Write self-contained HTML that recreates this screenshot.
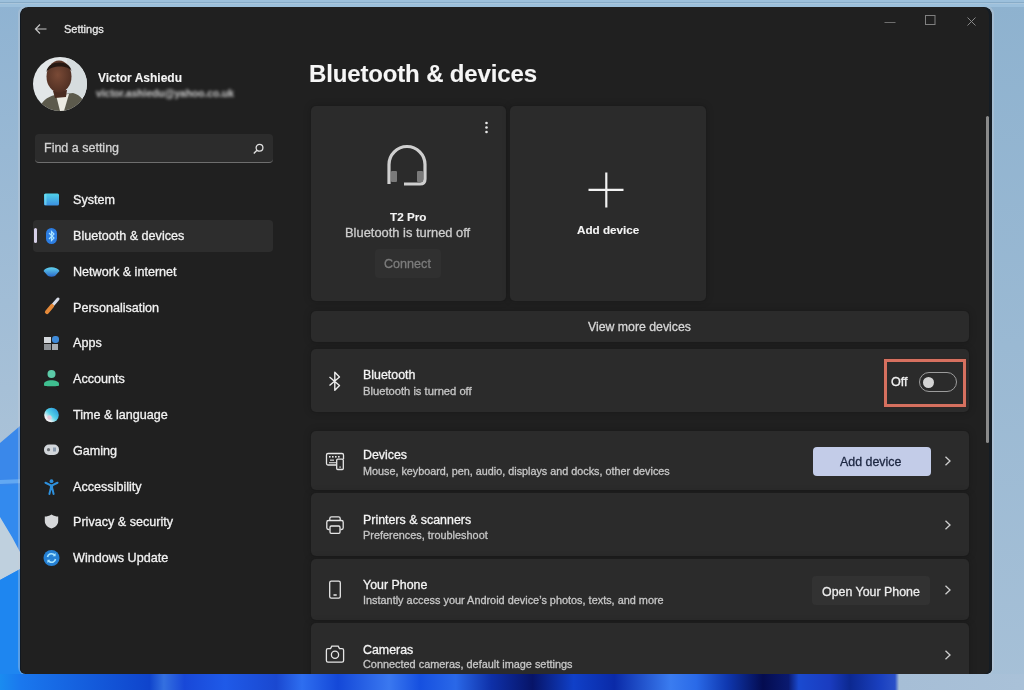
<!DOCTYPE html>
<html><head><meta charset="utf-8">
<style>
*{margin:0;padding:0;box-sizing:border-box}
html,body{width:1024px;height:690px;overflow:hidden}
body{position:relative;font-family:"Liberation Sans",sans-serif;background:#a3bfd6;color:#fff}
.abs{position:absolute}
.t{position:absolute;white-space:nowrap;line-height:1;will-change:transform;-webkit-text-stroke-width:0.3px}
#win{position:absolute;left:20px;top:7px;width:972px;height:667px;background:#202020;border-radius:8px 8px 5px 5px;overflow:hidden;box-shadow:inset -3px 0 0 #141c24,inset 1px 0 0 #111820}
.nav{position:absolute;left:73px;font-size:12.6px;line-height:1;color:#f2f2f2;white-space:nowrap;will-change:transform;-webkit-text-stroke-width:0.3px}
.card{position:absolute;background:#2b2b2b;border-radius:5px;box-shadow:0 0 0 1px #1c1c1c,0 0 6px 2px rgba(0,0,0,.12)}
.row{position:absolute;left:311px;width:658px;background:#2b2b2b;border-radius:5px;box-shadow:0 0 0 1px #1c1c1c,0 0 6px 2px rgba(0,0,0,.12)}
.h{font-size:12.4px;color:#f4f4f4}
.s{font-size:10.9px;color:#c6c6c6}
.chev{position:absolute;left:944px;width:8px;height:10px}
svg{position:absolute;overflow:visible}
</style></head><body>
<!-- wallpaper -->
<svg style="left:0;top:0" width="1024" height="690" viewBox="0 0 1024 690">
<defs>
<linearGradient id="gl" x1="0" y1="0" x2="0" y2="1"><stop offset="0" stop-color="#8fb3d2"/><stop offset="1" stop-color="#b8cadb"/></linearGradient>
<linearGradient id="gr" x1="0" y1="0" x2="0" y2="1"><stop offset="0" stop-color="#8eb2cf"/><stop offset="1" stop-color="#a6c0d7"/></linearGradient>
<linearGradient id="gb" x1="0" y1="0" x2="1" y2="0"><stop offset="0" stop-color="#1a8cf0"/><stop offset="0.02" stop-color="#1a78ee"/><stop offset="0.146" stop-color="#0f44cc"/><stop offset="0.16" stop-color="#3470e0"/><stop offset="0.18" stop-color="#1848d8"/><stop offset="0.22" stop-color="#1f5ae8"/><stop offset="0.27" stop-color="#1a48d0"/><stop offset="0.295" stop-color="#2e6ef0"/><stop offset="0.33" stop-color="#1448d8"/><stop offset="0.38" stop-color="#3a78f0"/><stop offset="0.41" stop-color="#1650e0"/><stop offset="0.445" stop-color="#2a68e8"/><stop offset="0.48" stop-color="#0e30a8"/><stop offset="0.52" stop-color="#071468"/><stop offset="0.56" stop-color="#1040c8"/><stop offset="0.6" stop-color="#0a2aa8"/><stop offset="0.655" stop-color="#3a7cf0"/><stop offset="0.68" stop-color="#2a6ae8"/><stop offset="0.71" stop-color="#0f38b0"/><stop offset="0.745" stop-color="#040c50"/><stop offset="0.77" stop-color="#0a1a70"/><stop offset="0.78" stop-color="#1a4ad0"/><stop offset="0.81" stop-color="#1a3cc0"/><stop offset="0.83" stop-color="#0c2890"/><stop offset="0.86" stop-color="#1a40c0"/><stop offset="0.874" stop-color="#2a50c8"/><stop offset="0.878" stop-color="#a6bed6"/><stop offset="1" stop-color="#a9c1d8"/></linearGradient>
</defs>
<rect x="0" y="0" width="1024" height="690" fill="url(#gr)"/>
<rect x="0" y="0" width="24" height="690" fill="url(#gl)"/>
<path d="M0,443 L20,426 L24,423 L24,690 L0,690Z" fill="#3a88ea"/>
<path d="M0,480 L24,479 L24,483 L0,484Z" fill="#62a8f2"/>
<path d="M0,486 L24,484 L24,540 L0,560Z" fill="#2e8cf0" opacity=".6"/><path d="M0,517 L12,537 L20,552 L24,552 L24,567 L0,580Z" fill="#bfd0de"/>
<path d="M0,580 L24,567 L24,690 L0,690Z" fill="#1e86f0"/>
<rect x="18" y="5" width="976" height="671" rx="9" fill="rgb(200,205,215)" opacity=".35"/>
<rect x="0" y="674" width="1024" height="16" fill="url(#gb)"/>
<rect x="0" y="0" width="1024" height="7" fill="#9cc0dc"/><rect x="0" y="2" width="1024" height="1" fill="#88acc8"/><rect x="0" y="3" width="1024" height="1" fill="#aac6dc"/>
</svg>

<div id="app" style="position:absolute;left:0;top:0;width:1024px;height:690px;clip-path:inset(7px 32px 16px 20px round 8px 8px 5px 5px)">
<div id="win"></div>

<!-- title bar -->
<svg style="left:34px;top:23px" width="14" height="12" viewBox="0 0 14 12"><path d="M1.5,6 H12.5 M6,1.5 L1.5,6 L6,10.5" fill="none" stroke="#c4c4c4" stroke-width="1.2"/></svg>
<div class="t" style="left:64px;top:23.7px;font-size:11px;color:#e8e8e8">Settings</div>
<svg style="left:884px;top:18px" width="12" height="8"><path d="M0.5,4.5 H11.5" stroke="#6e6e6e" stroke-width="1"/></svg>
<svg style="left:925px;top:15px" width="11" height="11"><rect x="0.5" y="0.5" width="9.5" height="9" fill="none" stroke="#808080" stroke-width="1"/></svg>
<svg style="left:967px;top:16.5px" width="9" height="9"><path d="M0.5,0.5 L8.5,8.5 M8.5,0.5 L0.5,8.5" stroke="#888888" stroke-width="1"/></svg>

<!-- avatar -->
<svg style="left:33px;top:57px" width="54" height="54" viewBox="0 0 54 54">
<defs><clipPath id="cav"><circle cx="27" cy="27" r="27"/></clipPath>
<radialGradient id="gface" cx="0.45" cy="0.45" r="0.6"><stop offset="0" stop-color="#7a4a36"/><stop offset="1" stop-color="#4e2e22"/></radialGradient></defs>
<g clip-path="url(#cav)">
<rect width="54" height="54" fill="#e2e6e8"/>
<rect x="34" y="0" width="20" height="40" fill="#d6dcde"/>
<path d="M6,54 C8,44 14,40 22,38 L40,36 C48,38 52,44 54,54Z" fill="#5c5a4c"/>
<path d="M23,38 L27,54 L31,54 L36,37Z" fill="#ecebe2"/>
<path d="M20,34 L34,33 L33,40 L22,41Z" fill="#4a2c20"/>
<ellipse cx="26" cy="19.5" rx="12.5" ry="16" fill="url(#gface)"/>
<path d="M13.5,15 C14,3 37,2 38.5,14 C35,8 18,8 13.5,15Z" fill="#251812"/>
</g></svg>
<div class="t" style="left:98px;top:72px;font-size:12px;font-weight:bold;-webkit-text-stroke-width:0.1px;color:#f4f4f4">Victor Ashiedu</div>
<div class="t" style="left:96px;top:88.5px;font-size:10.2px;font-weight:bold;-webkit-text-stroke-width:0.1px;color:#c4c4c4;filter:blur(1.4px)">victor.ashiedu@yahoo.co.uk</div>

<!-- search -->
<div class="abs" style="left:35px;top:134px;width:238px;height:29px;background:#2c2c2c;border-radius:4px;border-bottom:1px solid #6e6e6e"></div>
<div class="t" style="left:44px;top:142.4px;font-size:12.5px;color:#d2d2d2">Find a setting</div>
<svg style="left:251.5px;top:143px" width="13" height="12" viewBox="0 0 13 12"><circle cx="7.5" cy="4.8" r="3.4" fill="none" stroke="#e0e0e0" stroke-width="1.3"/><path d="M5,7.3 L1.8,10.5" stroke="#e0e0e0" stroke-width="1.4"/></svg>

<!-- nav -->
<div class="abs" style="left:33px;top:220px;width:240px;height:32px;background:#2d2d2d;border-radius:4px"></div>
<div class="abs" style="left:33.5px;top:228px;width:3px;height:15px;background:#d6d0e8;border-radius:2px"></div>

<!-- nav icons -->
<svg style="left:44px;top:193px" width="15" height="13" viewBox="0 0 15 13"><defs><linearGradient id="gs" x1="0" y1="0" x2="0" y2="1"><stop offset="0" stop-color="#50d2ea"/><stop offset="1" stop-color="#3b8fe0"/></linearGradient></defs><rect x="0" y="0.5" width="15" height="12" rx="1.5" fill="url(#gs)"/><rect x="0.5" y="1" width="2" height="11" fill="#7ee4f4" opacity=".6"/></svg>
<svg style="left:46px;top:228px" width="11" height="16" viewBox="0 0 11 16"><rect x="0" y="0" width="11" height="16" rx="5.5" fill="#2c7de2"/><path d="M3,5 L8,10 L5.5,12.5 V3.5 L8,6 L3,11" fill="none" stroke="#a8e2ff" stroke-width="1.2"/></svg>
<svg style="left:43px;top:266px" width="17" height="11" viewBox="0 0 17 11"><defs><linearGradient id="gn" x1="0" y1="0" x2="0" y2="1"><stop offset="0" stop-color="#62d4f0"/><stop offset="1" stop-color="#2a68c8"/></linearGradient></defs><path d="M0.5,5 C3,0 14,0 16.5,5 L12,10 C10,11 7,11 5,10Z" fill="url(#gn)"/></svg>
<svg style="left:44px;top:297px" width="16" height="18" viewBox="0 0 16 18"><path d="M14,2 L8,9" stroke="#d8dce8" stroke-width="3" stroke-linecap="round"/><path d="M8,9 L3,15" stroke="#e58a3a" stroke-width="4.2" stroke-linecap="round"/></svg>
<svg style="left:44px;top:336px" width="15" height="15" viewBox="0 0 15 15"><rect x="0" y="1" width="7" height="6" fill="#d4d8dc"/><rect x="8" y="0" width="7" height="7" rx="3" fill="#3e8ad8"/><rect x="0" y="8" width="7" height="6" fill="#8c9196"/><rect x="8" y="8" width="6" height="6" fill="#a8adb2"/></svg>
<svg style="left:45px;top:369px" width="13" height="18" viewBox="0 0 13 18"><circle cx="6.5" cy="5" r="4" fill="#5ccba8"/><path d="M-1,15 C-1,10 14,10 14,15 L14,16.5 C14,17.5 -1,17.5 -1,16.5Z" fill="#3fbf90"/></svg>
<svg style="left:44px;top:407px" width="15" height="16" viewBox="0 0 15 16"><defs><linearGradient id="gt" x1="1" y1="0" x2="0" y2="1"><stop offset="0" stop-color="#1b8ad8"/><stop offset="0.5" stop-color="#57d2e8"/><stop offset="0.75" stop-color="#f0f2f4"/><stop offset="1" stop-color="#f4e8ee"/></linearGradient></defs><circle cx="7.5" cy="8" r="7.3" fill="url(#gt)"/><circle cx="5.5" cy="10.5" r="2.2" fill="#e4c8d8"/></svg>
<svg style="left:44px;top:444px" width="15" height="12" viewBox="0 0 15 12"><rect x="0" y="0.5" width="15" height="10.5" rx="5" fill="#d2d6da"/><circle cx="4.5" cy="5.7" r="1.6" fill="#6a6e72"/><rect x="9" y="3.5" width="3" height="4" fill="#8c9cae"/></svg>
<svg style="left:44px;top:479px" width="16" height="16" viewBox="0 0 16 16"><circle cx="7.5" cy="2.2" r="1.9" fill="#2e90dc"/><path d="M1.5,3.8 L7.5,6.6 L13.5,3.8" fill="none" stroke="#2e90dc" stroke-width="2.1" stroke-linecap="round" stroke-linejoin="round"/><rect x="5.9" y="5.8" width="3.2" height="4.8" fill="#2e90dc"/><path d="M6.6,10 L5.4,15 M8.4,10 L9.6,15" stroke="#2e90dc" stroke-width="2" stroke-linecap="round"/></svg>
<svg style="left:44px;top:514px" width="15" height="15" viewBox="0 0 15 15"><path d="M7.5,0.5 C5,2 3,2.5 0.8,2.5 V7 C0.8,11 4,13.5 7.5,14.5 C11,13.5 14.2,11 14.2,7 V2.5 C12,2.5 10,2 7.5,0.5Z" fill="#d6d8da"/></svg>
<svg style="left:43px;top:549px" width="17" height="18" viewBox="0 0 17 18"><circle cx="8.5" cy="9" r="8" fill="#2580d4"/><path d="M4.5,8 C5,5 8,4 10.5,5.2 L11.8,6.2 M12.5,10 C12,13 9,14 6.5,12.8 L5.2,11.8" fill="none" stroke="#a8e4ff" stroke-width="1.6"/><path d="M12.6,4 V7.2 H9.6Z M4.4,14 V10.8 H7.4Z" fill="#a8e4ff"/></svg>

<div class="nav" style="top:194px">System</div>
<div class="nav" style="top:229.9px">Bluetooth &amp; devices</div>
<div class="nav" style="top:265.7px">Network &amp; internet</div>
<div class="nav" style="top:301.5px">Personalisation</div>
<div class="nav" style="top:337.3px">Apps</div>
<div class="nav" style="top:373.1px">Accounts</div>
<div class="nav" style="top:409px">Time &amp; language</div>
<div class="nav" style="top:444.7px">Gaming</div>
<div class="nav" style="top:480.5px">Accessibility</div>
<div class="nav" style="top:516.3px">Privacy &amp; security</div>
<div class="nav" style="top:552.3px">Windows Update</div>

<!-- header -->
<div class="t" style="left:309px;top:62px;font-size:24px;font-weight:bold;-webkit-text-stroke-width:0.1px;letter-spacing:-0.15px;color:#f6f6f6">Bluetooth &amp; devices</div>

<!-- device cards -->
<div class="card" style="left:311px;top:106px;width:195px;height:195px"></div>
<div class="card" style="left:510px;top:106px;width:195.5px;height:195px"></div>
<svg style="left:484px;top:120px" width="5" height="15"><circle cx="2.5" cy="3" r="1.3" fill="#e8e8e8"/><circle cx="2.5" cy="7.5" r="1.3" fill="#e8e8e8"/><circle cx="2.5" cy="12" r="1.3" fill="#e8e8e8"/></svg>
<svg style="left:380px;top:140px" width="56" height="50" viewBox="380 140 56 50">
<path d="M389,184 V164.5 A18,18 0 0 1 425,164.5 V179 Q425,184 420,184 H404" fill="none" stroke="#cfcfcf" stroke-width="3.2"/>
<rect x="391" y="171" width="6" height="11" rx="1" fill="#7a7a7a"/>
<rect x="417" y="171" width="6" height="11" rx="1" fill="#7a7a7a"/>
</svg>
<div class="t" style="left:389.5px;top:210.9px;font-size:11.7px;font-weight:bold;-webkit-text-stroke-width:0.1px;color:#f4f4f4">T2 Pro</div>
<div class="t" style="left:345px;top:226.9px;font-size:12.9px;color:#cdcdcd">Bluetooth is turned off</div>
<div class="abs" style="left:375px;top:249px;width:66px;height:29px;background:#303030;border-radius:4px"></div>
<div class="t" style="left:383.5px;top:258.3px;font-size:12.6px;color:#7c7c7c">Connect</div>
<svg style="left:588px;top:172px" width="37" height="37"><path d="M0.5,17.8 H35.5 M18.3,0.5 V35.5" stroke="#f2f2f2" stroke-width="2.2"/></svg>
<div class="t" style="left:576.5px;top:224.4px;font-size:11.7px;font-weight:bold;-webkit-text-stroke-width:0.1px;color:#f4f4f4">Add device</div>

<!-- view more -->
<div class="row" style="top:310.5px;height:31.5px"></div>
<div class="t" style="left:588px;top:321.3px;font-size:12.3px;color:#d6d6d6">View more devices</div>

<!-- bluetooth row -->
<div class="row" style="top:348.5px;height:63.5px"></div>
<svg style="left:328px;top:371px" width="13" height="21" viewBox="328 371 13 21"><path d="M329.5,377 L339.5,385.5 L334.8,390.3 V372.3 L339.5,377 L329.5,385.5" fill="none" stroke="#ececec" stroke-width="1.4" stroke-linejoin="round"/></svg>
<div class="t h" style="left:362.5px;top:369.3px">Bluetooth</div>
<div class="t s" style="left:362.5px;top:385.6px;font-size:11.2px">Bluetooth is turned off</div>
<div class="t" style="left:890.5px;top:376.3px;font-size:12.6px;color:#f0f0f0">Off</div>
<div class="abs" style="left:919px;top:372px;width:38px;height:19.5px;border:1.5px solid #9c9c9c;border-radius:10px"></div>
<div class="abs" style="left:922.5px;top:376.6px;width:11px;height:11px;background:#d4d4d4;border-radius:50%"></div>
<div class="abs" style="left:884px;top:358.7px;width:82px;height:48.5px;border:3px solid #d6705f;box-shadow:0 0 1.5px rgba(90,20,10,.6)"></div>

<!-- devices row -->
<div class="row" style="top:430.5px;height:59.5px"></div>
<svg style="left:325px;top:452px" width="20" height="19" viewBox="325 452 20 19">
<path d="M336,465 H328 Q326.5,465 326.5,463.5 V455 Q326.5,453.5 328,453.5 H342 Q343.5,453.5 343.5,455 V459" fill="none" stroke="#e6e6e6" stroke-width="1.3"/>
<rect x="329" y="456" width="1.6" height="1.6" fill="#e6e6e6"/><rect x="332" y="456" width="1.6" height="1.6" fill="#e6e6e6"/><rect x="335" y="456" width="1.6" height="1.6" fill="#e6e6e6"/><rect x="338" y="456" width="1.6" height="1.6" fill="#e6e6e6"/>
<rect x="330" y="459.5" width="4" height="1.4" fill="#bdbdbd"/><rect x="329" y="462" width="7" height="1.3" fill="#bdbdbd"/>
<rect x="336.7" y="459.2" width="6.6" height="10.3" rx="1" fill="#2b2b2b" stroke="#e6e6e6" stroke-width="1.3"/>
<rect x="339.4" y="466.5" width="1.4" height="1.2" fill="#e6e6e6"/>
</svg>
<div class="t h" style="left:362.5px;top:449.3px">Devices</div>
<div class="t s" style="left:362.5px;top:465.9px;font-size:10.8px">Mouse, keyboard, pen, audio, displays and docks, other devices</div>
<div class="abs" style="left:813px;top:446.5px;width:118px;height:29px;background:#c3cce8;border-radius:4px"></div>
<div class="t" style="left:840px;top:455.5px;font-size:12.4px;color:#1c2640">Add device</div>

<!-- printers -->
<div class="row" style="top:493px;height:62.5px"></div>
<svg style="left:325px;top:515px" width="20" height="20" viewBox="325 515 20 20">
<path d="M329.8,520.5 V518.5 Q329.8,516.8 331.5,516.8 H338.5 Q340.2,516.8 340.2,518.5 V520.5" fill="none" stroke="#e6e6e6" stroke-width="1.3"/>
<path d="M329.5,529.5 H328.5 Q326.8,529.5 326.8,527.8 V522.3 Q326.8,520.5 328.5,520.5 H341.5 Q343.2,520.5 343.2,522.3 V527.8 Q343.2,529.5 341.5,529.5 H340.5" fill="none" stroke="#e6e6e6" stroke-width="1.3"/>
<rect x="330" y="526" width="10" height="7.3" rx="1.2" fill="none" stroke="#e6e6e6" stroke-width="1.3"/>
</svg>
<div class="t h" style="left:362.5px;top:514.2px">Printers &amp; scanners</div>
<div class="t s" style="left:362.5px;top:530.3px">Preferences, troubleshoot</div>

<!-- phone -->
<div class="row" style="top:558.5px;height:61.5px"></div>
<svg style="left:327px;top:579px" width="16" height="22" viewBox="327 579 16 22"><rect x="329.7" y="581.2" width="10.6" height="17" rx="1.6" fill="none" stroke="#e6e6e6" stroke-width="1.3"/><rect x="333.3" y="594.3" width="3.6" height="1.4" rx=".6" fill="#e6e6e6"/></svg>
<div class="t h" style="left:362.5px;top:578.8px">Your Phone</div>
<div class="t s" style="left:362.5px;top:595px">Instantly access your Android device’s photos, texts, and more</div>
<div class="abs" style="left:812px;top:575.5px;width:118px;height:29px;background:#323232;border-radius:4px"></div>
<div class="t" style="left:821.5px;top:585.5px;font-size:12.4px;color:#ececec">Open Your Phone</div>

<!-- cameras -->
<div class="row" style="top:622.5px;height:60px"></div>
<svg style="left:325px;top:643px" width="20" height="21" viewBox="325 643 20 21"><path d="M330.5,648.6 L331.8,646.2 H338.2 L339.5,648.6 H342 Q343.6,648.6 343.6,650.2 V660.6 Q343.6,662.2 342,662.2 H328 Q326.4,662.2 326.4,660.6 V650.2 Q326.4,648.6 328,648.6Z" fill="none" stroke="#e6e6e6" stroke-width="1.3"/><circle cx="335" cy="654.8" r="3.6" fill="none" stroke="#e6e6e6" stroke-width="1.3"/></svg>
<div class="t h" style="left:362.5px;top:643.5px">Cameras</div>
<div class="t s" style="left:362.5px;top:659.2px">Connected cameras, default image settings</div>

<!-- chevrons -->
<svg class="chev" style="top:456px" viewBox="0 0 8 10"><path d="M1.5,0.8 L6,5 L1.5,9.2" fill="none" stroke="#cfcfcf" stroke-width="1.3"/></svg>
<svg class="chev" style="top:520px" viewBox="0 0 8 10"><path d="M1.5,0.8 L6,5 L1.5,9.2" fill="none" stroke="#cfcfcf" stroke-width="1.3"/></svg>
<svg class="chev" style="top:584.7px" viewBox="0 0 8 10"><path d="M1.5,0.8 L6,5 L1.5,9.2" fill="none" stroke="#cfcfcf" stroke-width="1.3"/></svg>
<svg class="chev" style="top:649.6px" viewBox="0 0 8 10"><path d="M1.5,0.8 L6,5 L1.5,9.2" fill="none" stroke="#cfcfcf" stroke-width="1.3"/></svg>

<!-- scrollbar -->
<div class="abs" style="left:986px;top:116px;width:2.5px;height:327px;background:#8a8a8a;border-radius:2px"></div>
</div>
</body></html>
